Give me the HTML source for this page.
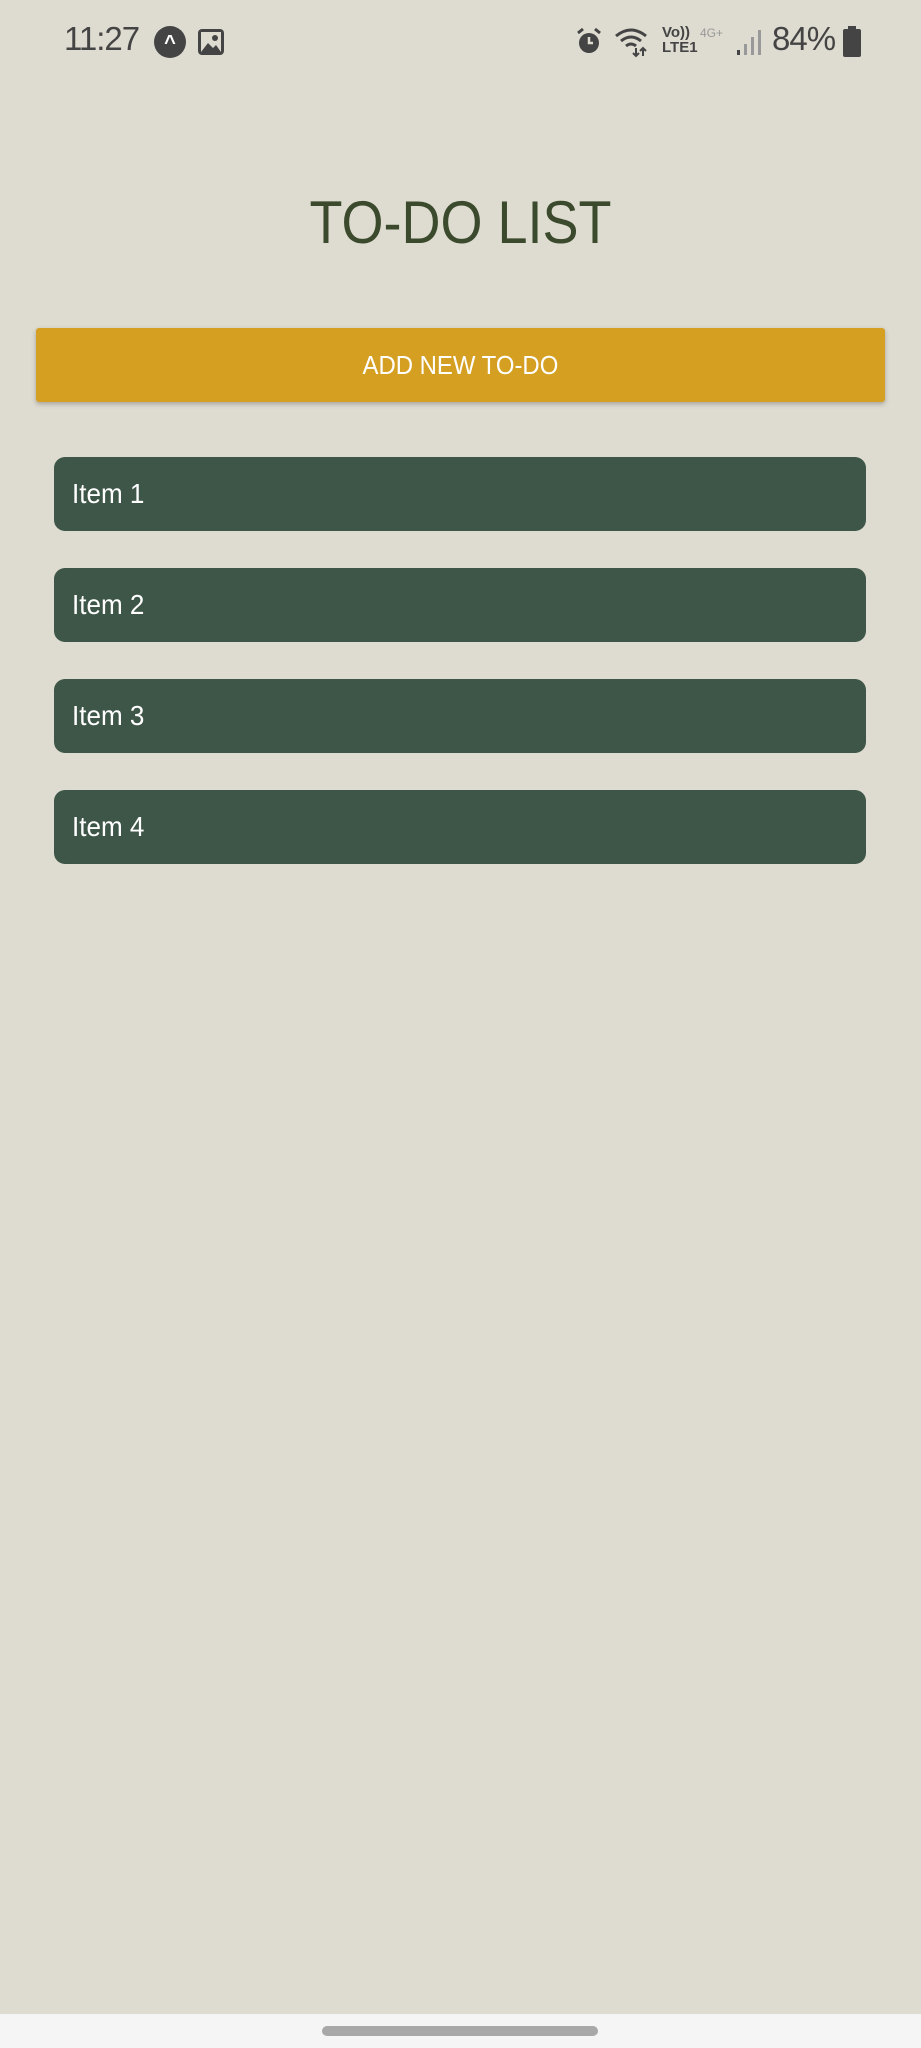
<!DOCTYPE html>
<html><head><style>
body{margin:0;width:921px;height:2048px;background:#DEDBD0;position:relative;overflow:hidden;font-family:"Liberation Sans",sans-serif}
.a{position:absolute}
.item{position:absolute;left:54px;width:812px;height:74px;background:#3E5648;border-radius:11px;color:#fff;font-size:28px;line-height:74px;padding-left:18px;box-sizing:border-box}
.item span{display:inline-block;transform:scaleX(.93);transform-origin:left}
</style></head><body>
<div class="a" style="left:64px;top:20px;font-size:33px;color:#444;letter-spacing:-1px">11:27</div>
<div class="a" style="left:154px;top:26px;width:32px;height:32px;border-radius:50%;background:#444;color:#fff;font-size:20px;text-align:center;line-height:34px;font-weight:bold">^</div>
<svg class="a" style="left:197px;top:28px" width="28" height="28" viewBox="0 0 28 28"><rect x="1" y="1" width="26" height="26" rx="4" fill="#444"/><rect x="4" y="4" width="20" height="20" fill="#DEDBD0"/><path d="M4 24 L11 15 L16 20 L19 17 L24 24Z" fill="#444"/><circle cx="18" cy="10" r="3" fill="#444"/></svg>
<svg class="a" style="left:575px;top:27px" width="28" height="30" viewBox="0 0 28 30"><circle cx="14" cy="16" r="10" fill="#444"/><path d="M14 10V16H18" stroke="#DEDBD0" stroke-width="2.5" fill="none"/><path d="M3 6L8 2M25 6L20 2" stroke="#444" stroke-width="3"/></svg>
<svg class="a" style="left:614px;top:26px" width="36" height="32" viewBox="0 0 36 32"><path d="M2 10 Q17 -2 32 10" stroke="#444" stroke-width="3" fill="none"/><path d="M7 15 Q17 7 27 15" stroke="#444" stroke-width="3" fill="none"/><path d="M12 20 Q17 16 22 20" stroke="#444" stroke-width="3" fill="none"/><path d="M22 22V30M19 27L22 30L25 27M29 30V22M26 25L29 22L32 25" stroke="#444" stroke-width="2" fill="none"/></svg>
<div class="a" style="left:662px;top:25px;font-size:15px;font-weight:bold;color:#444;line-height:15px">Vo))<br>LTE1</div>
<div class="a" style="left:700px;top:26px;font-size:12px;color:#999">4G+</div>
<svg class="a" style="left:735px;top:28px" width="28" height="28" viewBox="0 0 28 28"><rect x="2" y="22" width="3" height="5" fill="#444"/><rect x="9" y="16" width="3" height="11" fill="#999"/><rect x="16" y="9" width="3" height="18" fill="#999"/><rect x="23" y="2" width="3" height="25" fill="#999"/></svg>
<div class="a" style="left:772px;top:20px;font-size:33px;color:#444;letter-spacing:-1px">84%</div>
<svg class="a" style="left:842px;top:26px" width="20" height="32" viewBox="0 0 20 32"><rect x="6" y="0" width="8" height="4" fill="#444"/><rect x="1" y="3" width="18" height="28" rx="2" fill="#444"/></svg>
<div class="a" style="left:0;width:921px;top:188px;text-align:center;font-size:60px;color:#3B4A2C;line-height:70px;transform:scaleX(.9)">TO-DO LIST</div>
<div class="a" style="left:36px;top:328px;width:849px;height:74px;background:#D59F21;border-radius:3px;box-shadow:0 2px 5px rgba(0,0,0,.25);color:#fff;font-size:26px;text-align:center;line-height:74px"><span style="display:inline-block;transform:scaleX(.92)">ADD NEW TO-DO</span></div>
<div class="item" style="top:457px"><span>Item 1</span></div>
<div class="item" style="top:568px"><span>Item 2</span></div>
<div class="item" style="top:679px"><span>Item 3</span></div>
<div class="item" style="top:790px"><span>Item 4</span></div>
<div class="a" style="left:0;top:2014px;width:921px;height:34px;background:#F5F5F5"></div>
<div class="a" style="left:322px;top:2026px;width:276px;height:10px;border-radius:5px;background:#A8A8A8"></div>
</body></html>
